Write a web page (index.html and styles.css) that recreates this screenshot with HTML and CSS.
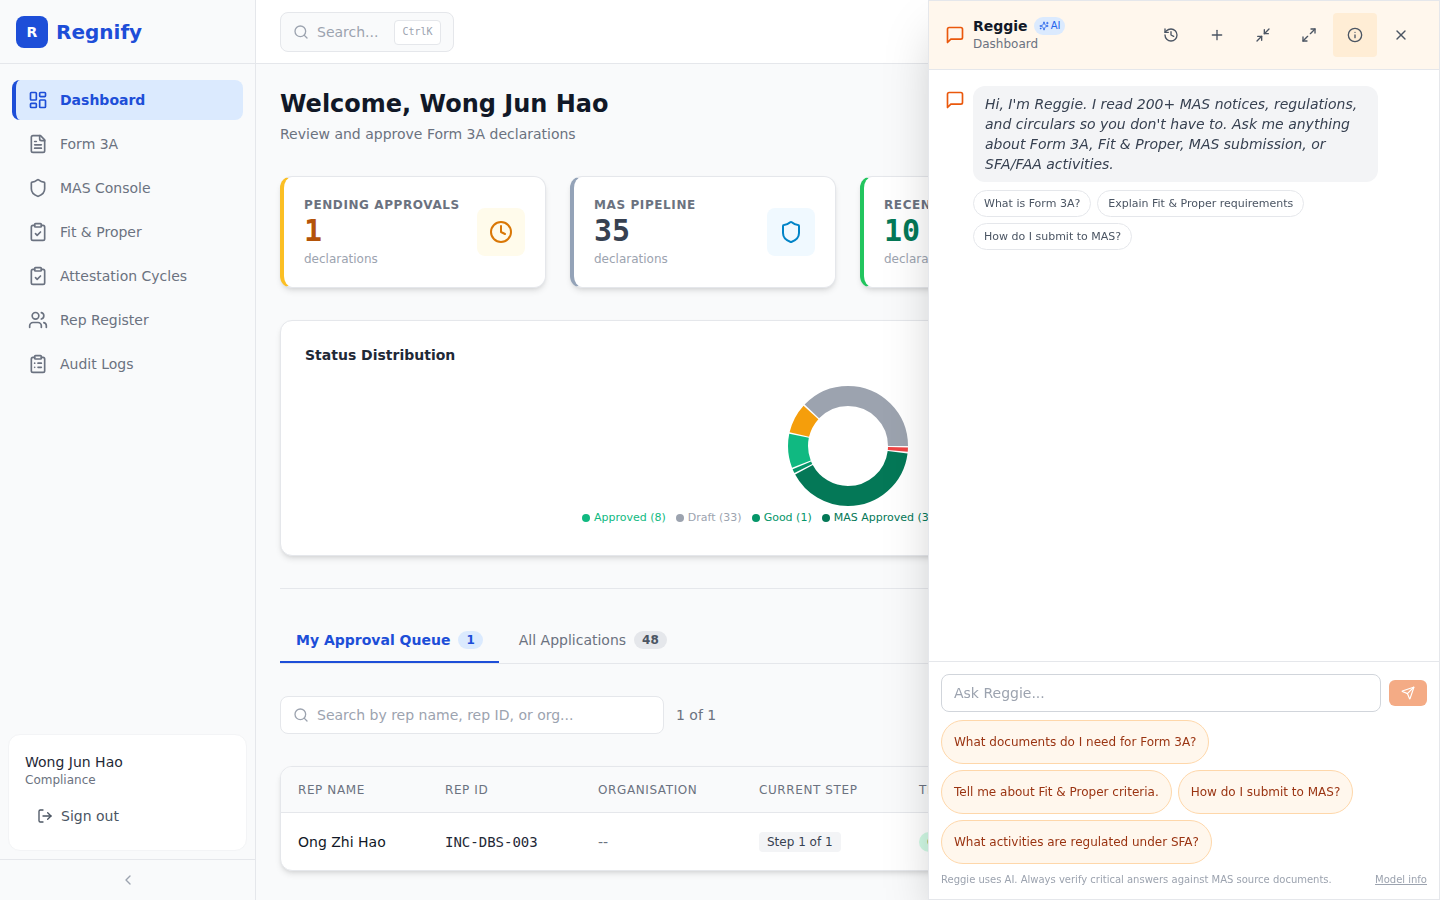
FILE: index.html
```html
<!DOCTYPE html>
<html lang="en">
<head>
<meta charset="utf-8">
<title>Regnify</title>
<link rel="stylesheet" href="styles.css">
</head>
<body>
<svg class="defs" aria-hidden="true">
  <symbol id="i-dash" viewBox="0 0 24 24"><rect width="7" height="9" x="3" y="3" rx="1"/><rect width="7" height="5" x="14" y="3" rx="1"/><rect width="7" height="9" x="14" y="12" rx="1"/><rect width="7" height="5" x="3" y="16" rx="1"/></symbol>
  <symbol id="i-file" viewBox="0 0 24 24"><path d="M15 2H6a2 2 0 0 0-2 2v16a2 2 0 0 0 2 2h12a2 2 0 0 0 2-2V7Z"/><path d="M14 2v4a2 2 0 0 0 2 2h4"/><path d="M10 9H8"/><path d="M16 13H8"/><path d="M16 17H8"/></symbol>
  <symbol id="i-shield" viewBox="0 0 24 24"><path d="M20 13c0 5-3.5 7.5-7.66 8.95a1 1 0 0 1-.67-.01C7.5 20.5 4 18 4 13V6a1 1 0 0 1 1-1c2 0 4.5-1.2 6.24-2.72a1.17 1.17 0 0 1 1.52 0C14.51 3.81 17 5 19 5a1 1 0 0 1 1 1z"/></symbol>
  <symbol id="i-check" viewBox="0 0 24 24"><rect width="8" height="4" x="8" y="2" rx="1" ry="1"/><path d="M16 4h2a2 2 0 0 1 2 2v14a2 2 0 0 1-2 2H6a2 2 0 0 1-2-2V6a2 2 0 0 1 2-2h2"/><path d="m9 14 2 2 4-4"/></symbol>
  <symbol id="i-users" viewBox="0 0 24 24"><path d="M16 21v-2a4 4 0 0 0-4-4H6a4 4 0 0 0-4 4v2"/><circle cx="9" cy="7" r="4"/><path d="M22 21v-2a4 4 0 0 0-3-3.87"/><path d="M16 3.13a4 4 0 0 1 0 7.75"/></symbol>
  <symbol id="i-list" viewBox="0 0 24 24"><rect width="8" height="4" x="8" y="2" rx="1" ry="1"/><path d="M16 4h2a2 2 0 0 1 2 2v14a2 2 0 0 1-2 2H6a2 2 0 0 1-2-2V6a2 2 0 0 1 2-2h2"/><path d="M12 11h4"/><path d="M12 16h4"/><path d="M8 11h.01"/><path d="M8 16h.01"/></symbol>
  <symbol id="i-logout" viewBox="0 0 24 24"><path d="M9 21H5a2 2 0 0 1-2-2V5a2 2 0 0 1 2-2h4"/><path d="m16 17 5-5-5-5"/><path d="M21 12H9"/></symbol>
  <symbol id="i-chev" viewBox="0 0 24 24"><path d="m15 18-6-6 6-6"/></symbol>
  <symbol id="i-search" viewBox="0 0 24 24"><circle cx="11" cy="11" r="8"/><path d="m21 21-4.3-4.3"/></symbol>
  <symbol id="i-clock" viewBox="0 0 24 24"><circle cx="12" cy="12" r="10"/><polyline points="12 6 12 12 16 14"/></symbol>
  <symbol id="i-msg" viewBox="0 0 24 24"><path d="M21 15a2 2 0 0 1-2 2H7l-4 4V5a2 2 0 0 1 2-2h14a2 2 0 0 1 2 2z"/></symbol>
  <symbol id="i-history" viewBox="0 0 24 24"><path d="M3 12a9 9 0 1 0 9-9 9.75 9.75 0 0 0-6.74 2.74L3 8"/><path d="M3 3v5h5"/><path d="M12 7v5l4 2"/></symbol>
  <symbol id="i-plus" viewBox="0 0 24 24"><path d="M5 12h14"/><path d="M12 5v14"/></symbol>
  <symbol id="i-min" viewBox="0 0 24 24"><path d="m14 10 7-7"/><path d="M20 10h-6V4"/><path d="m3 21 7-7"/><path d="M4 14h6v6"/></symbol>
  <symbol id="i-max" viewBox="0 0 24 24"><path d="M15 3h6v6"/><path d="m21 3-7 7"/><path d="m3 21 7-7"/><path d="M9 21H3v-6"/></symbol>
  <symbol id="i-info" viewBox="0 0 24 24"><circle cx="12" cy="12" r="10"/><path d="M12 16v-4"/><path d="M12 8h.01"/></symbol>
  <symbol id="i-x" viewBox="0 0 24 24"><path d="M18 6 6 18"/><path d="m6 6 12 12"/></symbol>
  <symbol id="i-send" viewBox="0 0 24 24"><path d="M14.536 21.686a.5.5 0 0 0 .937-.024l6.5-19a.496.496 0 0 0-.635-.635l-19 6.5a.5.5 0 0 0-.024.937l7.93 3.18a2 2 0 0 1 1.112 1.11z"/><path d="m21.854 2.147-10.94 10.939"/></symbol>
  <symbol id="i-spark" viewBox="0 0 24 24"><path d="M9.937 15.5A2 2 0 0 0 8.5 14.063l-6.135-1.582a.5.5 0 0 1 0-.962L8.5 9.936A2 2 0 0 0 9.937 8.5l1.582-6.135a.5.5 0 0 1 .963 0L14.063 8.5A2 2 0 0 0 15.5 9.937l6.135 1.581a.5.5 0 0 1 0 .964L15.5 14.063a2 2 0 0 0-1.437 1.437l-1.582 6.135a.5.5 0 0 1-.963 0z"/><path d="M20 3v4"/><path d="M22 5h-4"/><path d="M4 17v2"/><path d="M5 18H3"/></symbol>
</svg>

<aside class="sidebar">
  <div class="brand"><span class="brand-mark">R</span><span class="brand-name">Regnify</span></div>
  <nav class="nav">
    <a class="nav-item is-active"><svg class="ico ico-20"><use href="#i-dash"/></svg>Dashboard</a>
    <a class="nav-item"><svg class="ico ico-20"><use href="#i-file"/></svg>Form 3A</a>
    <a class="nav-item"><svg class="ico ico-20"><use href="#i-shield"/></svg>MAS Console</a>
    <a class="nav-item"><svg class="ico ico-20"><use href="#i-check"/></svg>Fit &amp; Proper</a>
    <a class="nav-item"><svg class="ico ico-20"><use href="#i-check"/></svg>Attestation Cycles</a>
    <a class="nav-item"><svg class="ico ico-20"><use href="#i-users"/></svg>Rep Register</a>
    <a class="nav-item"><svg class="ico ico-20"><use href="#i-list"/></svg>Audit Logs</a>
  </nav>
  <div class="user-card">
    <div class="user-name">Wong Jun Hao</div>
    <div class="user-role">Compliance</div>
    <a class="signout"><svg class="ico ico-16"><use href="#i-logout"/></svg>Sign out</a>
  </div>
  <div class="collapse"><svg class="ico ico-16"><use href="#i-chev"/></svg></div>
</aside>

<div class="main">
  <header class="topbar">
    <div class="top-search">
      <svg class="ico ico-16"><use href="#i-search"/></svg>
      <span class="top-search-text">Search...</span>
      <kbd class="kbd">Ctrl<span class="kbd-k">K</span></kbd>
    </div>
  </header>
  <main class="content">
    <h1 class="title">Welcome, Wong Jun Hao</h1>
    <p class="subtitle">Review and approve Form 3A declarations</p>

    <section class="stats">
      <article class="stat stat-amber">
        <div class="stat-body">
          <div class="stat-label">Pending Approvals</div>
          <div class="stat-value">1</div>
          <div class="stat-note">declarations</div>
        </div>
        <div class="stat-icon"><svg class="ico ico-24"><use href="#i-clock"/></svg></div>
      </article>
      <article class="stat stat-slate">
        <div class="stat-body">
          <div class="stat-label">MAS Pipeline</div>
          <div class="stat-value">35</div>
          <div class="stat-note">declarations</div>
        </div>
        <div class="stat-icon"><svg class="ico ico-24"><use href="#i-shield"/></svg></div>
      </article>
      <article class="stat stat-green">
        <div class="stat-body">
          <div class="stat-label">Recent Approvals</div>
          <div class="stat-value">10</div>
          <div class="stat-note">declarations</div>
        </div>
        <div class="stat-icon"><svg class="ico ico-24"><use href="#i-check"/></svg></div>
      </article>
    </section>

    <section class="chart-card">
      <h2 class="chart-title">Status Distribution</h2>
      <svg class="donut" viewBox="0 0 130 130" width="130" height="130">
        <g class="donut-ring">
          <circle class="seg seg-draft" cx="65" cy="65" r="50" pathLength="360" stroke-dasharray="136.3 360" stroke-dashoffset="0"/>
          <circle class="seg seg-amber" cx="65" cy="65" r="50" pathLength="360" stroke-dasharray="28.9 360" stroke-dashoffset="-137.8"/>
          <circle class="seg seg-approved" cx="65" cy="65" r="50" pathLength="360" stroke-dasharray="33 360" stroke-dashoffset="-168.2"/>
          <circle class="seg seg-good" cx="65" cy="65" r="50" pathLength="360" stroke-dasharray="4.13 360" stroke-dashoffset="-202.7"/>
          <circle class="seg seg-mas" cx="65" cy="65" r="50" pathLength="360" stroke-dasharray="144.5 360" stroke-dashoffset="-208.3"/>
          <circle class="seg seg-red" cx="65" cy="65" r="50" pathLength="360" stroke-dasharray="4.13 360" stroke-dashoffset="-354.3"/>
        </g>
      </svg>
      <ul class="legend">
        <li class="lg lg-approved"><i class="dot"></i>Approved (8)</li>
        <li class="lg lg-draft"><i class="dot"></i>Draft (33)</li>
        <li class="lg lg-good"><i class="dot"></i>Good (1)</li>
        <li class="lg lg-mas"><i class="dot"></i>MAS Approved (35)</li>
        <li class="lg lg-amber"><i class="dot"></i>Pending (7)</li>
        <li class="lg lg-red"><i class="dot"></i>Rejected (1)</li>
      </ul>
    </section>

    <hr class="divider">

    <div class="tabs">
      <button class="tab is-active">My Approval Queue<span class="tab-badge">1</span></button>
      <button class="tab">All Applications<span class="tab-badge">48</span></button>
    </div>

    <div class="filter-row">
      <div class="filter-search">
        <svg class="ico ico-16"><use href="#i-search"/></svg>
        <span>Search by rep name, rep ID, or org...</span>
      </div>
      <span class="count">1 of 1</span>
    </div>

    <section class="table">
      <div class="t-row t-head">
        <div>Rep Name</div><div>Rep ID</div><div>Organisation</div><div>Current Step</div><div>Tier</div>
      </div>
      <div class="t-row t-body">
        <div class="t-name">Ong Zhi Hao</div>
        <div class="t-mono">INC-DBS-003</div>
        <div class="t-org">--</div>
        <div><span class="step">Step 1 of 1</span></div>
        <div><span class="tier">Good</span></div>
      </div>
    </section>
  </main>
</div>

<section class="panel">
  <header class="panel-head">
    <svg class="ico ico-20 msg-ico"><use href="#i-msg"/></svg>
    <div class="panel-id">
      <div class="panel-title">Reggie<span class="ai-badge"><svg class="ico ico-10"><use href="#i-spark"/></svg>AI</span></div>
      <div class="panel-sub">Dashboard</div>
    </div>
    <div class="panel-tools">
      <button class="tool"><svg class="ico ico-16"><use href="#i-history"/></svg></button>
      <button class="tool"><svg class="ico ico-16"><use href="#i-plus"/></svg></button>
      <button class="tool"><svg class="ico ico-16"><use href="#i-min"/></svg></button>
      <button class="tool"><svg class="ico ico-16"><use href="#i-max"/></svg></button>
      <button class="tool is-on"><svg class="ico ico-16"><use href="#i-info"/></svg></button>
      <button class="tool"><svg class="ico ico-16"><use href="#i-x"/></svg></button>
    </div>
  </header>
  <div class="messages">
    <svg class="ico ico-20 msg-ico"><use href="#i-msg"/></svg>
    <div class="msg-col">
      <div class="bubble">Hi, I'm Reggie. I read 200+ MAS notices, regulations, and circulars so you don't have to. Ask me anything about Form 3A, Fit &amp; Proper, MAS submission, or SFA/FAA activities.</div>
      <div class="quick">
        <button class="quick-chip">What is Form 3A?</button>
        <button class="quick-chip">Explain Fit &amp; Proper requirements</button>
        <button class="quick-chip">How do I submit to MAS?</button>
      </div>
    </div>
  </div>
  <footer class="composer">
    <div class="composer-row">
      <div class="ask">Ask Reggie...</div>
      <button class="send"><svg class="ico ico-14"><use href="#i-send"/></svg></button>
    </div>
    <div class="suggest">
      <button class="suggest-chip">What documents do I need for Form 3A?</button>
      <button class="suggest-chip">Tell me about Fit &amp; Proper criteria.</button>
      <button class="suggest-chip">How do I submit to MAS?</button>
      <button class="suggest-chip">What activities are regulated under SFA?</button>
    </div>
    <div class="disclaimer"><span>Reggie uses AI. Always verify critical answers against MAS source documents.</span><a class="model-info">Model info</a></div>
  </footer>
</section>
</body>
</html>
```
FILE: styles.css
```css
* { box-sizing: border-box; }
html, body { height: 100%; }
body {
  margin: 0;
  display: flex;
  height: 100vh;
  overflow: hidden;
  background: #f9fafb;
  color: #111827;
  font-family: "DejaVu Sans", sans-serif;
  font-size: 14px;
  line-height: 20px;
}
button { font: inherit; background: none; border: 0; padding: 0; color: inherit; }
.defs { position: absolute; width: 0; height: 0; }
.ico { fill: none; stroke: currentColor; stroke-width: 2; stroke-linecap: round; stroke-linejoin: round; flex: none; display: block; }
.ico-10 { width: 10px; height: 10px; }
.ico-14 { width: 14px; height: 14px; }
.ico-16 { width: 16px; height: 16px; }
.ico-20 { width: 20px; height: 20px; }
.ico-24 { width: 24px; height: 24px; }

/* Sidebar */
.sidebar { width: 256px; flex: none; height: 100vh; display: flex; flex-direction: column; background: #f9fafb; border-right: 1px solid #e5e7eb; }
.brand { height: 64px; flex: none; display: flex; align-items: center; gap: 8px; padding: 0 16px; border-bottom: 1px solid #e5e7eb; }
.brand-mark { width: 32px; height: 32px; border-radius: 8px; background: #1d4ed8; color: #fff; font-weight: 700; font-size: 14px; display: flex; align-items: center; justify-content: center; }
.brand-name { font-size: 20px; font-weight: 700; color: #1d4ed8; line-height: 28px; }
.nav { flex: 1; padding: 16px 12px; display: flex; flex-direction: column; gap: 4px; }
.nav-item { height: 40px; display: flex; align-items: center; gap: 12px; padding-left: 16px; border-radius: 8px; color: #6b7280; }
.nav-item.is-active { background: #dbeafe; color: #1d4ed8; font-weight: 700; border-left: 4px solid #1d4ed8; padding-left: 12px; }
.user-card { margin: 0 8px 8px; height: 117px; padding: 16px 16px 0; background: #fff; border: 1px solid #f3f4f6; border-radius: 12px; }
.user-name { color: #1f2937; line-height: 20px; margin-top: 1px; }
.user-role { color: #6b7280; font-size: 12px; line-height: 16px; }
.signout { display: flex; align-items: center; gap: 8px; color: #4b5563; height: 40px; margin-top: 8px; padding-left: 12px; }
.collapse { height: 41px; flex: none; border-top: 1px solid #e5e7eb; display: flex; align-items: center; justify-content: center; color: #9ca3af; }

/* Main */
.main { flex: 1; min-width: 0; display: flex; flex-direction: column; }
.topbar { height: 64px; flex: none; background: #fff; border-bottom: 1px solid #e5e7eb; padding: 12px 24px; }
.top-search { width: 174px; height: 40px; display: flex; align-items: center; gap: 8px; padding: 0 12px; background: #f9fafb; border: 1px solid #e5e7eb; border-radius: 8px; color: #9ca3af; }
.top-search-text { flex: 1; }
.kbd { width: 47px; height: 25px; margin-right: 0; display: flex; align-items: center; justify-content: center; background: #fff; border: 1px solid #e5e7eb; border-radius: 4px; font-family: "DejaVu Sans Mono", monospace; font-size: 10px; color: #9ca3af; }
.content { flex: 1; padding: 24px; min-width: 0; }
.title { margin: 0; font-size: 24px; line-height: 32px; font-weight: 700; color: #111827; }
.subtitle { margin: 4px 0 0; color: #6b7280; }

.stats { margin-top: 32px; display: grid; grid-template-columns: repeat(4, 1fr); gap: 24px; }
.stat { height: 112px; display: flex; align-items: center; justify-content: space-between; padding: 0 20px; background: #fff; border: 1px solid #e5e7eb; border-left-width: 4px; border-radius: 12px; box-shadow: 0 4px 6px -1px rgba(0,0,0,.1), 0 2px 4px -2px rgba(0,0,0,.1); }
.stat-amber { border-left-color: #fbbf24; }
.stat-slate { border-left-color: #94a3b8; }
.stat-green { border-left-color: #22c55e; }
.stat-label { font-size: 12px; line-height: 16px; font-weight: 700; letter-spacing: .05em; text-transform: uppercase; color: #6b7280; }
.stat-value { font-family: "DejaVu Sans Mono", monospace; font-size: 30px; line-height: 36px; font-weight: 700; }
.stat-note { margin-top: 2px; font-size: 12px; line-height: 16px; color: #9ca3af; }
.stat-amber .stat-value { color: #b45309; }
.stat-slate .stat-value { color: #374151; }
.stat-green .stat-value { color: #047857; }
.stat-icon { width: 48px; height: 48px; border-radius: 8px; display: flex; align-items: center; justify-content: center; }
.stat-amber .stat-icon { background: #fffbeb; color: #d97706; }
.stat-slate .stat-icon { background: #f0f9ff; color: #0284c7; }
.stat-green .stat-icon { background: #ecfdf5; color: #059669; }

.chart-card { margin-top: 32px; height: 236px; padding: 24px; background: #fff; border: 1px solid #e5e7eb; border-radius: 12px; box-shadow: 0 4px 6px -1px rgba(0,0,0,.1), 0 2px 4px -2px rgba(0,0,0,.1); }
.chart-title { margin: 0 0 16px; font-size: 14px; line-height: 20px; font-weight: 700; color: #1f2937; }
.donut { display: block; margin: 0 auto; }
.donut-ring { transform: translate(0, 130px) scale(1, -1); }
.seg { fill: none; stroke-width: 20; }
.seg-draft { stroke: #9ca3af; }
.seg-amber { stroke: #f59e0b; }
.seg-approved { stroke: #10b981; }
.seg-good { stroke: #059669; }
.seg-mas { stroke: #047857; }
.seg-red { stroke: #ef4444; }
.legend { list-style: none; margin: 0; padding: 0; display: flex; justify-content: center; gap: 10px; font-size: 11px; line-height: 14px; }
.lg { display: flex; align-items: center; gap: 4px; white-space: nowrap; }
.dot { width: 8px; height: 8px; border-radius: 50%; }
.lg-approved { color: #10b981; } .lg-approved .dot { background: #10b981; }
.lg-draft { color: #9ca3af; } .lg-draft .dot { background: #9ca3af; }
.lg-good { color: #059669; } .lg-good .dot { background: #059669; }
.lg-mas { color: #047857; } .lg-mas .dot { background: #047857; }
.lg-amber { color: #f59e0b; } .lg-amber .dot { background: #f59e0b; }
.lg-red { color: #ef4444; } .lg-red .dot { background: #ef4444; }

.divider { margin: 32px 0; border: 0; border-top: 1px solid #e5e7eb; }
.tabs { display: flex; gap: 4px; height: 44px; border-bottom: 1px solid #e5e7eb; margin-top: -1px; }
.tab { height: 43px; padding: 0 16px 2px; display: flex; align-items: center; gap: 8px; color: #6b7280; border-bottom: 2px solid transparent; }
.tab.is-active { color: #1d4ed8; font-weight: 700; border-bottom-color: #1d4ed8; }
.tab-badge { height: 18px; padding: 0 8px; border-radius: 9px; background: #e5e7eb; color: #4b5563; font-size: 12px; font-weight: 700; line-height: 18px; }
.tab.is-active .tab-badge { background: #dbeafe; color: #1d4ed8; }

.filter-row { margin-top: 32px; display: flex; align-items: center; gap: 12px; }
.filter-search { width: 384px; height: 38px; padding: 0 12px; display: flex; align-items: center; gap: 8px; background: #fff; border: 1px solid #e5e7eb; border-radius: 8px; color: #9ca3af; }
.count { color: #6b7280; }

.table { margin-top: 32px; height: 105px; background: #fff; border: 1px solid #e5e7eb; border-radius: 12px; overflow: hidden; box-shadow: 0 4px 6px -1px rgba(0,0,0,.1), 0 2px 4px -2px rgba(0,0,0,.1); }
.t-row { display: grid; grid-template-columns: 147px 153px 161px 160px 1fr; padding-left: 17px; align-items: center; }
.t-head { height: 46px; background: #f9fafb; border-bottom: 1px solid #e5e7eb; font-size: 12px; letter-spacing: .05em; text-transform: uppercase; color: #6b7280; }
.t-body { height: 57px; }
.t-name { color: #111827; }
.t-mono { font-family: "DejaVu Sans Mono", monospace; color: #1f2937; }
.t-org { color: #6b7280; }
.step { display: inline-block; height: 20px; padding: 0 8px; background: #f3f4f6; border-radius: 4px; font-size: 12px; line-height: 20px; color: #374151; }
.tier { display: inline-block; height: 20px; padding: 0 8px; background: #d1fae5; border-radius: 10px; font-size: 12px; line-height: 20px; color: #047857; }

/* Reggie panel */
.panel { position: fixed; top: 0; right: 0; bottom: 0; width: 512px; display: flex; flex-direction: column; background: #fff; border: 1px solid #e5e7eb; box-shadow: 0 25px 50px -12px rgba(0,0,0,.25); }
.panel-head { height: 69px; flex: none; display: flex; align-items: center; gap: 8px; padding: 0 16px; background: #fff7ed; border-bottom: 1px solid #e5e7eb; }
.msg-ico { color: #ea580c; }
.panel-id { flex: 1; }
.panel-title { display: flex; align-items: center; gap: 6px; font-weight: 700; color: #111827; line-height: 18px; }
.ai-badge { display: flex; align-items: center; gap: 2px; height: 18px; padding: 0 5px; border-radius: 9px; background: #dbeafe; color: #2563eb; font-size: 10px; font-weight: 400; }
.panel-sub { font-size: 12px; line-height: 18px; color: #6b7280; }
.panel-tools { display: flex; gap: 2px; }
.tool { width: 44px; height: 44px; display: flex; align-items: center; justify-content: center; border-radius: 4px; color: #4b5563; }
.tool.is-on { background: #ffedd5; }
.messages { flex: 1; display: flex; gap: 8px; padding: 16px; align-items: flex-start; }
.messages .msg-ico { margin-top: 4px; }
.msg-col { flex: 1; }
.bubble { width: 90%; padding: 8px 12px; background: #f3f4f6; border-radius: 12px; font-style: italic; color: #374151; }
.quick { margin-top: 8px; display: flex; flex-wrap: wrap; gap: 6px; }
.quick-chip { height: 27px; padding: 0 10px; border: 1px solid #e5e7eb; border-radius: 14px; background: #fff; font-size: 11px; line-height: 15px; color: #4b5563; }
.composer { flex: none; border-top: 1px solid #e5e7eb; padding: 12px 12px 11px; }
.composer-row { display: flex; align-items: center; gap: 8px; }
.ask { flex: 1; height: 38px; padding: 0 12px; display: flex; align-items: center; border: 1px solid #d1d5db; border-radius: 8px; color: #9ca3af; }
.send { width: 38px; height: 26px; display: flex; align-items: center; justify-content: center; border-radius: 6px; background: #f4ab85; color: #fff; }
.suggest { margin-top: 8px; display: flex; flex-wrap: wrap; gap: 6px; }
.suggest-chip { height: 44px; padding: 0 12px; border: 1px solid #fed7aa; border-radius: 22px; background: #fff7ed; color: #9a3412; font-size: 12px; line-height: 16px; }
.disclaimer { margin-top: 8px; display: flex; justify-content: space-between; font-size: 10px; line-height: 16px; color: #9ca3af; }
.model-info { text-decoration: underline; }
```
